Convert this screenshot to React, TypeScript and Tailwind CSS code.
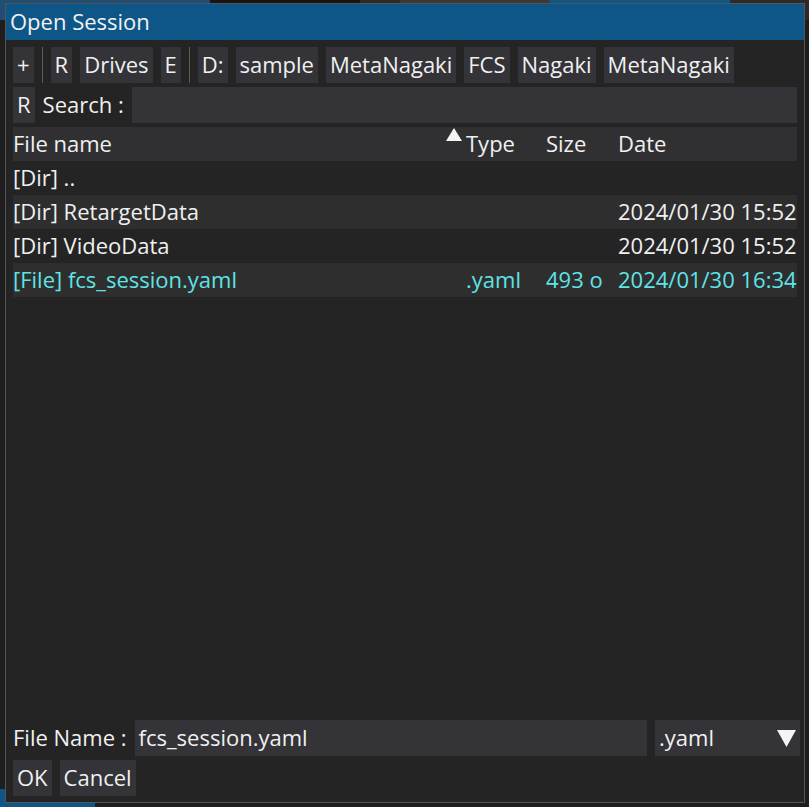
import React from "react";

const font = { fontFamily: '"Open Sans", "Noto Sans", sans-serif' };

function Btn({ children, className = "" }: { children: React.ReactNode; className?: string }) {
  return (
    <div className={"h-[36px] px-[4px] pb-[2px] flex items-center bg-[#333338] text-[#f0f0f0] whitespace-nowrap " + className}>
      {children}
    </div>
  );
}

function Sep() {
  return <div className="w-px h-[36px] bg-[#5a5a5a]" />;
}

const rows = [
  { name: "[Dir] ..", type: "", size: "", date: "", file: false },
  { name: "[Dir] RetargetData", type: "", size: "", date: "2024/01/30 15:52", file: false },
  { name: "[Dir] VideoData", type: "", size: "", date: "2024/01/30 15:52", file: false },
  { name: "[File] fcs_session.yaml", type: ".yaml", size: "493 o", date: "2024/01/30 16:34", file: true },
];

export default function App() {
  return (
    <div className="relative w-[809px] h-[807px] overflow-hidden bg-[#1e1e1e] text-[22px] leading-none" style={font}>
      {/* background app glimpses */}
      <div className="absolute left-0 top-0 w-[809px] h-[20px] flex bg-[#2a2a2a] overflow-hidden">
        <div className="w-[210px] h-full bg-[#1f4d74]" />
        <div className="w-[150px] h-full bg-[#151515]" />
        <div className="w-[40px] h-full" />
        <div className="w-[150px] h-full bg-[#3a3a3a]" />
        <div className="w-[180px] h-full bg-[#0f5688]" />
        <div className="flex-1 h-full bg-[#2a2a2a]" />
      </div>
      <div className="absolute left-0 bottom-0 w-[95px] h-[18px] bg-[#0f5688]" />

      {/* dialog window */}
      <div className="absolute left-[5px] top-[3px] w-[800px] h-[800px] border border-[#555555] bg-[#242424] flex flex-col">
        <div className="h-[36px] bg-[#0f5688] text-[#f2f2f2] flex items-center pl-[4px] pb-[3px] shrink-0">Open Session</div>
        <div className="flex-1 flex flex-col px-[7px] pt-[7px] pb-[6px] text-[#f0f0f0]">
          <div className="flex items-center gap-[8px] h-[36px]">
            <Btn>+</Btn>
            <Sep />
            <Btn>R</Btn>
            <Btn>Drives</Btn>
            <Btn>E</Btn>
            <Sep />
            <Btn>D:</Btn>
            <Btn>sample</Btn>
            <Btn>MetaNagaki</Btn>
            <Btn>FCS</Btn>
            <Btn>Nagaki</Btn>
            <Btn>MetaNagaki</Btn>
          </div>
          <div className="flex items-center gap-[8px] h-[36px] mt-[4px]">
            <Btn>R</Btn>
            <div className="whitespace-nowrap pb-[2px]">Search :</div>
            <div className="flex-1 h-[36px] bg-[#333338]" />
          </div>
          <div className="mt-[4px] flex flex-col">
            <div className="grid grid-cols-[453px_80px_72px_1fr] h-[34px] pb-[2px] items-center bg-[#303033] whitespace-nowrap">
              <div>File name</div>
              <div className="relative">
                <svg className="absolute left-[-20px] top-[-4px]" width="16" height="13" viewBox="0 0 16 13">
                  <polygon points="8,0 16,13 0,13" fill="#f4f4f4" />
                </svg>
                Type
              </div>
              <div>Size</div>
              <div>Date</div>
            </div>
            {rows.map((r, i) => (
              <div
                key={i}
                className={
                  "grid grid-cols-[453px_80px_72px_1fr] h-[34px] pb-[2px] items-center whitespace-nowrap " +
                  (i % 2 === 1 ? "bg-[#2e2e2f] " : "") +
                  (r.file ? "text-[#5fe3e6]" : "text-[#f0f0f0]")
                }
              >
                <div>{r.name}</div>
                <div>{r.type}</div>
                <div>{r.size}</div>
                <div>{r.date}</div>
              </div>
            ))}
          </div>
          <div className="flex-1" />
          <div className="flex items-center h-[36px] gap-[8px]">
            <div className="whitespace-nowrap pb-[2px]">File Name :</div>
            <div className="flex-1 h-[36px] bg-[#333338] flex items-center pl-[4px] pb-[2px]">fcs_session.yaml</div>
            <div className="mr-[-3px] w-[145px] h-[36px] bg-[#333338] flex items-center pl-[4px] justify-between pr-[4px]">
              <span className="pb-[2px]">.yaml</span>
              <svg width="19" height="17" viewBox="0 0 19 17"><polygon points="0,0 19,0 9.5,17" fill="#f4f4f4" /></svg>
            </div>
          </div>
          <div className="flex items-center gap-[8px] h-[36px] mt-[4px]">
            <Btn>OK</Btn>
            <Btn>Cancel</Btn>
          </div>
        </div>
      </div>
    </div>
  );
}
